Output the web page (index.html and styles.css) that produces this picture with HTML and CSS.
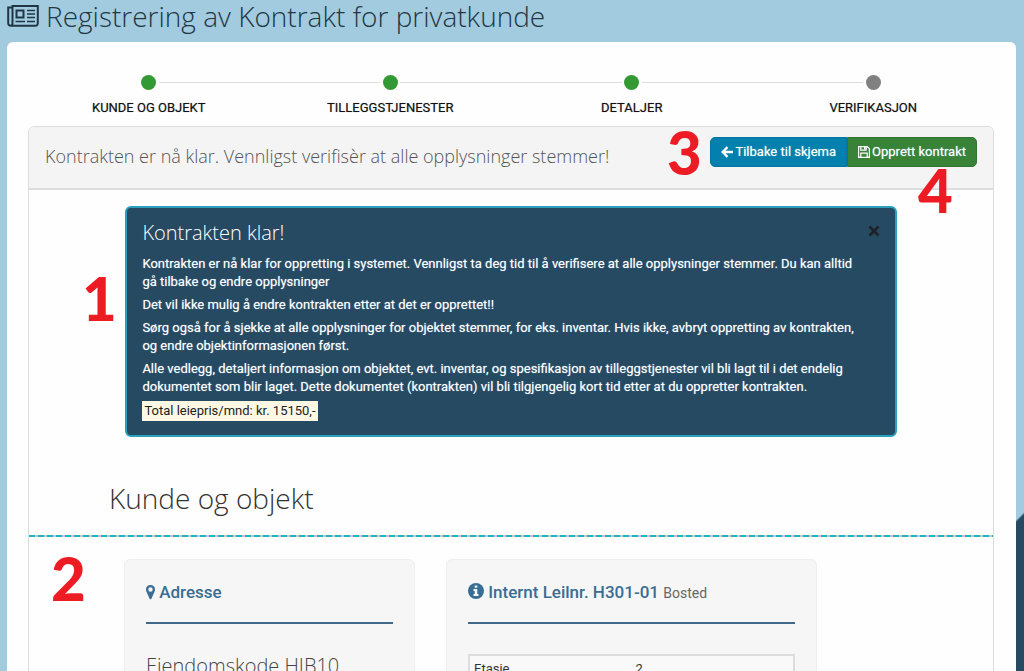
FILE: index.html
```html
<!DOCTYPE html>
<html lang="no">
<head>
<meta charset="utf-8">
<meta name="viewport" content="width=device-width, initial-scale=1">
<title>Registrering av Kontrakt for privatkunde</title>
<link rel="stylesheet" href="styles.css">
</head>
<body>
<header class="page-header">
  <svg class="icon-news" viewBox="0 0 32 24" aria-hidden="true">
    <path d="M5.5 3.5H1.2V19a2.6 2.6 0 0 0 2.6 2.8H28.500a2.300 2.300 0 0 0 2.300-2.300V2H5.500V19.500a2 2 0 0 1-2 2" fill="none" stroke="currentColor" stroke-width="2"/>
    <path d="M9.500 6.500h7v7h-7z" fill="none" stroke="currentColor" stroke-width="2"/>
    <path d="M20 6.500h8M20 10h8M20 13.500h8M8.500 17.500H18M20 17.500h8" fill="none" stroke="currentColor" stroke-width="1.700"/>
  </svg>
  <h1 class="page-title">Registrering av Kontrakt for privatkunde</h1>
</header>
<main class="sheet">
  <ol class="steps">
    <li class="step done">Kunde og objekt</li>
    <li class="step done">Tilleggstjenester</li>
    <li class="step done">Detaljer</li>
    <li class="step">Verifikasjon</li>
  </ol>
  <section class="panel">
    <div class="panel-head">
      <h2 class="panel-title">Kontrakten er nå klar. Vennligst verifisèr at alle opplysninger stemmer!</h2>
      <div class="btn-group">
        <button type="button" class="btn btn-back">
          <svg class="icon-btn" viewBox="0 0 12 12" aria-hidden="true"><path d="M6.500 1.200 1.700 6l4.800 4.800M2 6h10" fill="none" stroke="currentColor" stroke-width="2.400"/></svg>
          Tilbake til skjema
        </button>
        <button type="button" class="btn btn-save">
          <svg class="icon-btn" viewBox="0 0 12 12" aria-hidden="true"><path d="M.6.600h8.600l2.200 2.200v8.600H.600zM2.800.600v3.600h5.400V.600M2.800 11.400V7.200h6.400v4.200" fill="none" stroke="currentColor" stroke-width="1.200"/><path d="M6 1h1.500v2.500H6z" fill="currentColor"/></svg>
          Opprett kontrakt
        </button>
      </div>
    </div>
    <div class="alert" role="status">
      <div class="alert-head">
        <h3 class="alert-title">Kontrakten klar!</h3>
        <button type="button" class="close" aria-label="Lukk"><svg class="icon-close" viewBox="0 0 12 12" aria-hidden="true"><path d="M1.500 1.500l9 9M10.500 1.500l-9 9" stroke="currentColor" stroke-width="2.800"/></svg></button>
      </div>
      <p>Kontrakten er nå klar for oppretting i systemet. Vennligst ta deg tid til å verifisere at alle opplysninger stemmer. Du kan alltid gå tilbake og endre opplysninger</p>
      <p>Det vil ikke mulig å endre kontrakten etter at det er opprettet!!</p>
      <p>Sørg også for å sjekke at alle opplysninger for objektet stemmer, for eks. inventar. Hvis ikke, avbryt oppretting av kontrakten, og endre objektinformasjonen først.</p>
      <p>Alle vedlegg, detaljert informasjon om objektet, evt. inventar, og spesifikasjon av tilleggstjenester vil bli lagt til i det endelig dokumentet som blir laget. Dette dokumentet (kontrakten) vil bli tilgjengelig kort tid etter at du oppretter kontrakten.</p>
      <mark class="total">Total leiepris/mnd: kr. 15150,-</mark>
    </div>
    <h2 class="section-title">Kunde og objekt</h2>
    <div class="cards">
      <article class="card card-address">
        <h3 class="card-title">
          <svg class="icon-pin" viewBox="0 0 9 15" aria-hidden="true"><path fill="currentColor" fill-rule="evenodd" d="M4.500 0A4.400 4.400 0 0 1 9 4.500c0 1-.2 1.600-.5 2.200L5.400 13.800a1 1 0 0 1-1.800 0L.5 6.700C.2 6.100 0 5.500 0 4.500A4.400 4.400 0 0 1 4.500 0zm0 2.300a2.200 2.200 0 1 0 0 4.400 2.200 2.200 0 0 0 0-4.400z"/></svg>
          Adresse
        </h3>
        <p class="property">Eiendomskode HIB10</p>
      </article>
      <article class="card card-unit">
        <h3 class="card-title">
          <svg class="icon-info" viewBox="0 0 16 16" aria-hidden="true"><circle cx="8" cy="8" r="8" fill="currentColor"/><path fill="#f6f6f6" d="M6.700 2.500h2.600v2.200H6.700zM5.500 6h3.800v5h1.200v2h-5v-2h1.200V8H5.500z"/></svg>
          Internt Leilnr. H301-01 <small>Bosted</small>
        </h3>
        <table class="facts">
          <tbody>
            <tr><th scope="row">Etasje</th><td>2</td></tr>
          </tbody>
        </table>
      </article>
    </div>
  </section>
</main>
<span class="marker marker-1">1</span>
<span class="marker marker-2">2</span>
<span class="marker marker-3">3</span>
<span class="marker marker-4">4</span>
</body>
</html>
```
FILE: styles.css
```css
* { box-sizing: border-box; }
html { scrollbar-width: none; }
body {
  position: relative;
  margin: 0;
  height: 100vh;
  overflow: hidden;
  padding: 0 8px 0 7px;
  background: linear-gradient(135deg, #a2cbdf 0 1086px, #274a63 1088px);
  color: #222;
  font-family: Roboto, "Liberation Sans", sans-serif;
  font-size: 13px;
  line-height: 18px;
}
h1, h2, h3, p { margin: 0; }
h1, h2 { font-family: "Open Sans", sans-serif; font-weight: 300; }
.page-header {
  display: flex;
  align-items: center;
  gap: 7px;
  height: 32px;
  margin-bottom: 10px;
  color: #1f3744;
}
.icon-news { width: 32px; height: 24px; }
.page-title { font-size: 28px; line-height: 32px; }
.sheet {
  min-height: 100vh;
  padding: 33px 22px 0 21px;
  border-radius: 6px;
  background: #fefefe;
}
.steps {
  display: flex;
  margin: 0;
  padding: 0 0 9px;
  list-style: none;
}
.step {
  position: relative;
  flex: 1;
  color: #111;
  text-align: center;
  text-shadow: 0 0 1px #999;
  text-transform: uppercase;
}
.step::before {
  content: "";
  display: block;
  width: 15px;
  height: 15px;
  margin: 0 auto 9px;
  border-radius: 50%;
  background: #808080;
}
.step.done::before { background: #339933; }
.step + .step::after {
  content: "";
  position: absolute;
  top: 7px;
  right: calc(50% + 10px);
  width: calc(100% - 20px);
  border-top: 1px solid #ddd;
}
.panel {
  border: 1px solid #ddd;
  border-radius: 6px 6px 0 0;
  min-height: 100vh;
}
.panel-head {
  display: flex;
  align-items: flex-start;
  justify-content: space-between;
  padding: 10px 16px 16px;
  border-bottom: 2px solid #ddd;
  border-radius: 6px 6px 0 0;
  background: #f4f4f4;
}
.panel-title { padding-top: 3px; color: #555; font-size: 18px; line-height: 32px; }
.btn-group { display: flex; }
.btn {
  display: flex;
  align-items: center;
  gap: 2px;
  height: 30px;
  padding: 0 10px;
  border: 1px solid #0275a0;
  background: #0480ae;
  color: #fff;
  font: 400 13px/18px Roboto, sans-serif;
  text-shadow: 0 0 1px #9cc;
}
.btn-back { border-radius: 5px 0 0 5px; }
.btn-save { border-color: #30752f; border-radius: 0 5px 5px 0; background: #388338; }
.icon-btn { width: 12px; height: 12px; }
.alert {
  margin: 16px 10% 0;
  padding: 11px 15px 14px;
  border: 2px solid #2ba0bd;
  border-radius: 6px;
  background: #274a63;
  color: #fff;
  text-shadow: 0 0 1px #8ab;
}
.alert-head { display: flex; justify-content: space-between; margin-bottom: 8px; }
.alert-title { font-family: "Open Sans", sans-serif; font-size: 20px; font-weight: 300; line-height: 28px; text-shadow: none; }
.close { height: 24px; padding: 0; border: 0; background: none; color: #1d2226; }
.icon-close { display: block; width: 12px; height: 12px; }
.alert p { max-width: 722px; margin-bottom: 5px; }
.total {
  display: inline-block;
  padding: 1px 2px;
  background: #fcf8e3;
  color: #222;
  text-shadow: none;
}
.section-title {
  padding: 41px 80px 19px;
  background: repeating-linear-gradient(90deg, #1fb3c2 0 6px, #c9c3c1 6px 9px) left bottom / 100% 2px no-repeat;
  color: #333;
  font-size: 28px;
  line-height: 40px;
}
.cards { display: flex; align-items: stretch; gap: 31px; padding: 22px 95px 0; }
.card {
  min-height: 200px;
  padding: 21px;
  border: 1px solid #eee;
  border-radius: 6px;
  background: #f6f6f6;
}
.card-address { flex: 0 0 291px; }
.card-unit { flex: 0 0 371px; }
.card-title {
  height: 43px;
  border-bottom: 2px solid #42698a;
  color: #396d94;
  font-size: 17px;
  font-weight: 500;
  line-height: 22px;
}
.card-title small { color: #666; font-size: 14px; font-weight: 400; }
.icon-pin { width: 9px; height: 15px; vertical-align: -2px; }
.icon-info { width: 16px; height: 16px; vertical-align: -1px; }
.property { margin-top: 28px; font: 300 20px/28px "Open Sans", sans-serif; color: #444; }
.facts {
  width: 100%;
  margin-top: 30px;
  border: 2px solid #ddd;
  border-collapse: collapse;
  background: #f9f9f9;
  color: #333;
}
.facts th, .facts td { width: 50%; padding: 4px; font-weight: 400; text-align: left; }
.marker {
  position: absolute;
  color: #ed1c24;
  font: 900 60px/60px Lato, sans-serif;
}
.marker-1 { left: 82px; top: 268px; }
.marker-2 { left: 51px; top: 548px; }
.marker-3 { left: 667px; top: 122px; }
.marker-4 { left: 918px; top: 160px; }
```
